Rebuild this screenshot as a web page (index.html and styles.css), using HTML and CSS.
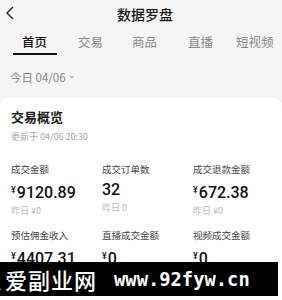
FILE: index.html
```html
<!DOCTYPE html>
<html>
<head>
<meta charset="utf-8">
<link rel="stylesheet" href="styles.css">
</head>
<body>
<div class="page">
  <div class="header">
    <svg class="back" width="10" height="14" viewBox="0 0 10 14"><path d="M8 1 L2 7 L8 13" fill="none" stroke="#222" stroke-width="1.4"/></svg>
    <div class="title">数据罗盘</div>
  </div>
  <div class="tabs">
    <div class="tab active">首页</div>
    <div class="tab">交易</div>
    <div class="tab">商品</div>
    <div class="tab">直播</div>
    <div class="tab">短视频</div>
  </div>
  <div class="date">今日 04/06 <span class="caret">⌄</span></div>
  <div class="card">
    <div class="card-title">交易概览</div>
    <div class="updated">更新于 04/06 20:30</div>
    <div class="grid">
      <div class="cell"><div class="label">成交金额</div><div class="value"><span class="yen">¥</span>9120.89</div><div class="prev">昨日 ¥0</div></div>
      <div class="cell"><div class="label">成交订单数</div><div class="value">32</div><div class="prev">昨日 0</div></div>
      <div class="cell"><div class="label">成交退款金额</div><div class="value"><span class="yen">¥</span>672.38</div><div class="prev">昨日 ¥0</div></div>
      <div class="cell"><div class="label">预估佣金收入</div><div class="value"><span class="yen">¥</span>4407.31</div><div class="prev">昨日 ¥0</div></div>
      <div class="cell"><div class="label">直播成交金额</div><div class="value"><span class="yen">¥</span>0</div><div class="prev">昨日 ¥0</div></div>
      <div class="cell"><div class="label">视频成交金额</div><div class="value"><span class="yen">¥</span>0</div><div class="prev">昨日 ¥0</div></div>
    </div>
  </div>
  <div class="watermark"><span class="wm-cut">、</span><span class="wm-cn">爱副业网</span><span class="wm-en">www.92fyw.cn</span></div>
</div>
</body>
</html>
```
FILE: styles.css
```css
* { box-sizing: border-box; }
body { margin: 0; background: #f5f5f5; font-family: "Noto Sans CJK SC", "Noto Sans", sans-serif; color: #222; }
.page { width: 282px; height: 300px; position: relative; overflow: hidden; }
.header { height: 28px; display: flex; align-items: center; justify-content: center; position: relative; }
.back { position: absolute; left: 5px; top: 6px; }
.title { font-size: 14px; font-weight: 500; color: #1a1a1a; margin-left: 8px; }
.tabs { height: 28px; display: flex; align-items: center; padding-left: 22px; position: relative; white-space: nowrap; }
.tab { flex: none; font-size: 12.5px; color: #888; margin-right: 31px; line-height: 28px; position: relative; }
.tab:nth-child(2) { margin-right: 29px; }
.tab:nth-child(4) { margin-right: 23px; }
.tab.active { color: #111; font-weight: 500; }
.tab.active::after { content: ""; position: absolute; left: -9px; right: -10px; bottom: 1px; height: 2px; background: #111; }
.date { height: 42px; padding-left: 10px; font-size: 11.5px; color: #888; display: flex; align-items: center; }
.caret { font-size: 9px; margin-left: 2px; position: relative; top: -3px; }
.card { background: #fff; border-radius: 8px 8px 0 0; padding: 10px 11px 0; height: 210px; }
.card-title { font-size: 13px; font-weight: 700; color: #1a1a1a; line-height: 18px; }
.updated { font-size: 9px; color: #aaa; line-height: 12px; margin-top: 5px; }
.grid { display: grid; grid-template-columns: 91px 91px 1fr; row-gap: 12px; margin-top: 20px; }
.label { font-size: 9.5px; color: #444; line-height: 13px; }
.value { font-size: 16px; color: #111; line-height: 20px; margin-top: 4px; font-family: "Roboto", "Noto Sans", sans-serif; font-weight: 500; }
.yen { font-size: 9px; vertical-align: 5px; margin-right: 1px; }
.prev { font-size: 9px; color: #bbb; line-height: 12px; margin-top: 2px; }
.watermark { position: absolute; left: 0; top: 262px; width: 278px; height: 34px; background: #000; color: #fff; display: flex; align-items: center; white-space: nowrap; overflow: hidden; }
.wm-cut { flex: none; font-size: 22px; font-weight: 500; width: 22px; margin-left: -7px; margin-right: -10px; }
.wm-cn { font-size: 22px; font-weight: 500; letter-spacing: 1px; }
.wm-en { font-family: "DejaVu Sans Mono", monospace; font-weight: 700; font-size: 18.8px; margin-left: 17px; }
```
